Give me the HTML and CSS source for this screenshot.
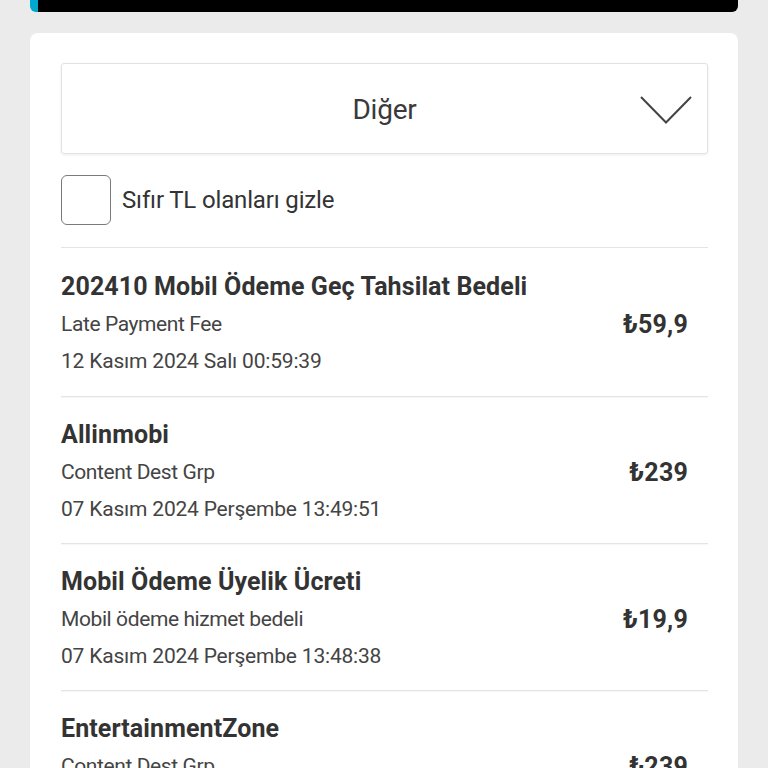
FILE: index.html
```html
<!DOCTYPE html>
<html lang="tr">
<head>
<meta charset="utf-8">
<title>Diğer</title>
<link rel="stylesheet" href="styles.css">
</head>
<body>
<div class="topbar"></div>
<main class="card">
  <div class="dropdown">
    <span></span>
    <span class="dropdown-label">Diğer</span>
    <svg class="chevron" width="52" height="30" viewBox="0 0 52 30"><polyline points="1,2 26,27.5 51,2" fill="none" stroke="#444" stroke-width="2"/></svg>
  </div>
  <label class="check-row">
    <span class="checkbox"></span>
    <span class="check-label">Sıfır TL olanları gizle</span>
  </label>
  <ul class="list">
    <li class="item">
      <div class="info">
        <div class="title">202410 Mobil Ödeme Geç Tahsilat Bedeli</div>
        <div class="sub">Late Payment Fee</div>
        <div class="date">12 Kasım 2024 Salı 00:59:39</div>
      </div>
      <div class="price">₺59,9</div>
    </li>
    <li class="item">
      <div class="info">
        <div class="title">Allinmobi</div>
        <div class="sub">Content Dest Grp</div>
        <div class="date">07 Kasım 2024 Perşembe 13:49:51</div>
      </div>
      <div class="price">₺239</div>
    </li>
    <li class="item">
      <div class="info">
        <div class="title">Mobil Ödeme Üyelik Ücreti</div>
        <div class="sub">Mobil ödeme hizmet bedeli</div>
        <div class="date">07 Kasım 2024 Perşembe 13:48:38</div>
      </div>
      <div class="price">₺19,9</div>
    </li>
    <li class="item">
      <div class="info">
        <div class="title">EntertainmentZone</div>
        <div class="sub">Content Dest Grp</div>
        <div class="date">05 Kasım 2024 Salı 10:12:05</div>
      </div>
      <div class="price">₺239</div>
    </li>
  </ul>
</main>
</body>
</html>
```

FILE: styles.css
```css
html, body {
  margin: 0;
  padding: 0;
  background: #ebebeb;
  font-family: Roboto, "Noto Sans", sans-serif;
  color: #333;
  overflow: hidden;
  height: 768px;
}

.topbar {
  margin: 0 30px;
  height: 12px;
  background: #000;
  border-left: 8px solid #00a9ce;
  border-radius: 0 0 6px 6px;
}

.card {
  display: block;
  margin: 21px 30px 0;
  background: #fff;
  border-radius: 8px;
  padding: 30px 30px 0 31px;
}

.dropdown {
  box-sizing: border-box;
  height: 91px;
  border: 1px solid #e2e2e2;
  border-radius: 3px;
  box-shadow: 0 1px 3px rgba(0, 0, 0, 0.08);
  display: grid;
  grid-template-columns: 1fr auto 1fr;
  align-items: center;
}

.dropdown-label {
  font-size: 28px;
  color: #3a3a3a;
  letter-spacing: -0.2px;
  padding-top: 2px;
}

.chevron {
  justify-self: end;
  margin-right: 15px;
  margin-top: 2px;
}

.check-row {
  display: flex;
  align-items: center;
  gap: 11px;
  margin-top: 21px;
}

.checkbox {
  box-sizing: border-box;
  width: 50px;
  height: 50px;
  border: 1.5px solid #7a7a7a;
  border-radius: 6px;
}

.check-label {
  font-size: 24px;
  letter-spacing: -0.15px;
  color: #333;
}

.list {
  list-style: none;
  margin: 22px 0 0;
  padding: 0;
  border-top: 1px solid #e4e4e4;
}

.item {
  display: flex;
  align-items: center;
  justify-content: space-between;
  padding: 23px 20px 16px 0;
  border-bottom: 1px solid #e4e4e4;
  box-shadow: 0 1px 1px rgba(0, 0, 0, 0.03);
}

.item:first-child {
  padding-top: 24px;
  padding-bottom: 17px;
}

.title {
  font-size: 25px;
  font-weight: 700;
  line-height: 30px;
  margin-bottom: 3px;
  color: #333;
  letter-spacing: 0.1px;
}

.sub {
  font-size: 21px;
  line-height: 38px;
  color: #444;
  letter-spacing: -0.4px;
}

.date {
  font-size: 21px;
  line-height: 36px;
  color: #444;
  letter-spacing: -0.2px;
}

.price {
  font-size: 25px;
  font-weight: 700;
  color: #333;
  letter-spacing: 0.2px;
  padding-bottom: 3px;
}
```
